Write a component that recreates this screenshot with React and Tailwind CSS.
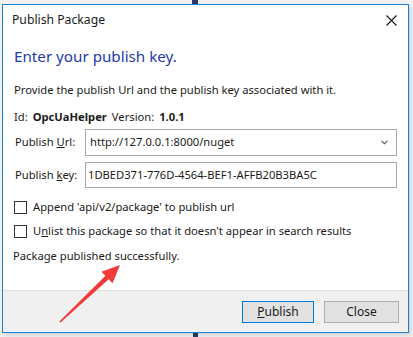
import React from 'react';

const font = { fontFamily: '"Noto Sans", "Open Sans", sans-serif' };

function Checkbox({ children }) {
  return (
    <label className="flex items-center gap-[6px] h-[16px]">
      <span className="w-[13px] h-[13px] border border-[#333333] bg-white shrink-0" />
      <span>{children}</span>
    </label>
  );
}

function Arrow() {
  return (
    <svg className="absolute left-0 top-0 pointer-events-none" width="413" height="337" viewBox="0 0 413 337">
      <polygon
        points="59.4,321.6 105.3,275.7 101.5,271.7 120,265 112.5,283.3 108.7,279.3 60.6,322.4"
        fill="#f23b3b"
      />
    </svg>
  );
}

export default function App() {
  return (
    <div className="relative w-[413px] h-[337px] overflow-hidden bg-[#f2f2f2] pt-[4px] pl-[2px] text-[11.2px] text-[#1a1a1a]" style={font}>
      {/* window behind the dialog */}
      <div className="absolute left-[192px] top-0 w-[6px] h-[4px] bg-[#2b3a67]" />
      <div className="absolute left-[193px] top-[332px] w-[5px] h-[5px] bg-[#2b3a67]" />

      <div className="relative w-[407px] h-[329px] border border-[#1883d7] bg-white flex flex-col shadow-[2px_2px_4px_rgba(0,0,0,0.15)]">
        {/* title bar */}
        <div className="h-[31px] flex items-center justify-between pl-[9px] pr-[11px] shrink-0">
          <span className="text-[12.2px]">Publish Package</span>
          <svg width="11" height="11" viewBox="0 0 11 11">
            <path d="M0.5 0.5 L10.5 10.5 M10.5 0.5 L0.5 10.5" stroke="#111" strokeWidth="1.1" />
          </svg>
        </div>

        <div className="flex-1 pl-[11px] pr-[10px]">
          <div className="mt-[9px] h-[22px] leading-[22px] text-[15.2px] text-[#1c3aa9]">Enter your publish key.</div>
          <div className="mt-[15px] h-[16px] leading-[16px]">Provide the publish Url and the publish key associated with it.</div>
          <div className="mt-[11px] h-[16px] leading-[16px] flex gap-[5px]">
            <span>Id:</span>
            <span className="font-bold">OpcUaHelper</span>
            <span>Version:</span>
            <span className="font-bold">1.0.1</span>
          </div>

          <div className="mt-[4px] flex items-center">
            <span className="w-[71px] pl-[1px]">Publish <span className="underline">U</span>rl:</span>
            <div className="w-[312px] h-[27px] border border-[#a8a8a8] flex items-center justify-between pl-[4px] pr-[8px]">
              <span>http://127.0.0.1:8000/nuget</span>
              <svg width="7" height="5" viewBox="0 0 7 5">
                <path d="M0.5 0.8 L3.5 3.8 L6.5 0.8" stroke="#555" strokeWidth="1.1" fill="none" />
              </svg>
            </div>
          </div>

          <div className="mt-[6px] flex items-center">
            <span className="w-[71px] pl-[1px]">Publish <span className="underline">k</span>ey:</span>
            <div className="w-[312px] h-[26px] border border-[#a8a8a8] flex items-center pl-[2px]">
              <span>1DBED371-776D-4564-BEF1-AFFB20B3BA5C</span>
            </div>
          </div>

          <div className="mt-[11px] flex flex-col gap-[8px]">
            <Checkbox>Append 'api/v2/package' to publish url</Checkbox>
            <Checkbox>U<span className="underline">n</span>list this package so that it doesn't appear in search results</Checkbox>
          </div>

          <div className="mt-[9px] h-[16px] leading-[16px] -ml-[1px]">Package published successfully.</div>
        </div>

        {/* footer */}
        <div className="h-[42px] shrink-0 border-t border-[#dfdfdf] bg-[#f0f0f0] flex items-start justify-end gap-[10px] pt-[10px] pr-[9px]">
          <button className="w-[72px] h-[22px] border border-[#0078d7] bg-[#e1e1e1] text-[12px]">
            <span className="underline">P</span>ublish
          </button>
          <button className="w-[75px] h-[22px] border border-[#adadad] bg-[#e1e1e1] text-[12px]">Close</button>
        </div>
      </div>

      <Arrow />
    </div>
  );
}
